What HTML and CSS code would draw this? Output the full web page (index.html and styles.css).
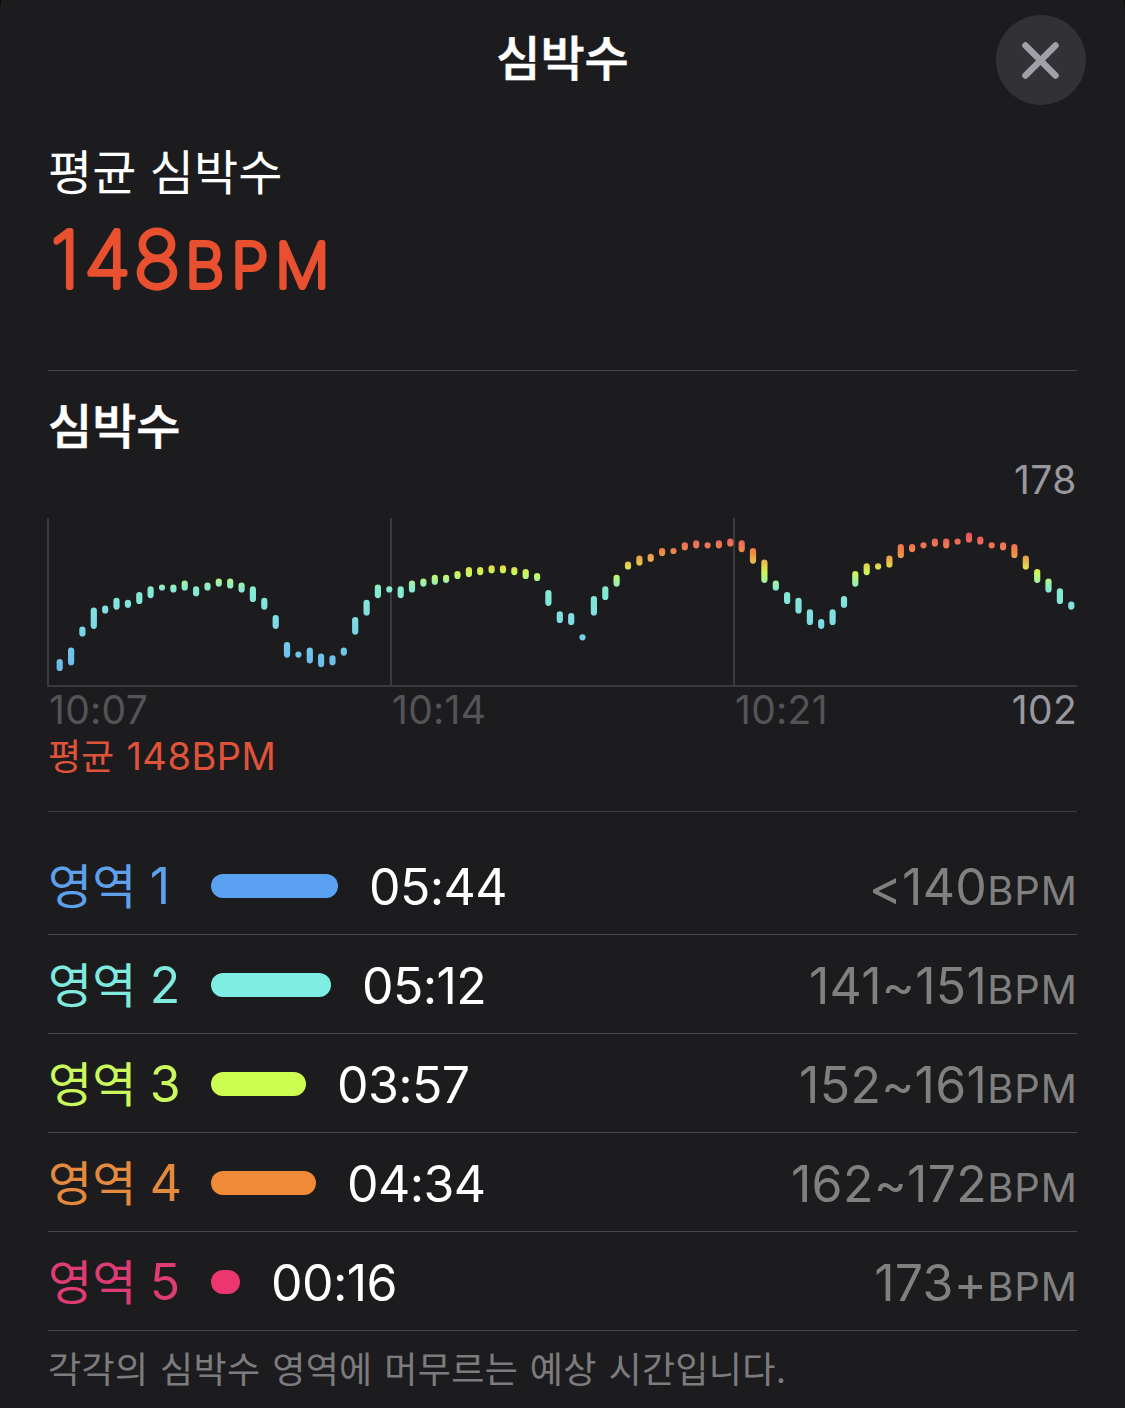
FILE: index.html
```html
<!DOCTYPE html>
<html lang="ko">
<head>
  <meta charset="UTF-8" />
  <meta name="viewport" content="width=device-width, initial-scale=1.0"/>
  <title>심박수</title>
  <link rel="stylesheet" href="styles.css">
</head>
<body>
  <div class="sheet">
    <header class="header">
      <h1 class="title">심박수</h1>
      <button class="close" aria-label="닫기">
        <svg width="90" height="90" viewBox="0 0 90 90">
          <path d="M29.5 30.5L59.5 60.5M59.5 30.5L29.5 60.5" />
        </svg>
      </button>
    </header>

    <section class="summary">
      <div class="summary-label">평균 심박수</div>
      <svg class="summary-value" width="300" height="100" viewBox="0 0 300 100">
        <text class="value" x="3 36.5 86" y="67">148</text>
        <text class="unit" x="137.5 183.5 227.5" y="67">BPM</text>
      </svg>
    </section>

    <section class="chart">
      <h2 class="chart-title">심박수</h2>
      <div class="chart-max">178</div>
      <svg class="plot" width="1030" height="169" viewBox="0 0 1030 169">
        <defs>
          <linearGradient id="zones" gradientUnits="userSpaceOnUse" x1="0" y1="14" x2="0" y2="154">
            <stop offset="0" stop-color="#ed4a62" />
            <stop offset="0.08" stop-color="#ec7056" />
            <stop offset="0.15" stop-color="#f08a42" />
            <stop offset="0.21" stop-color="#e8b84e" />
            <stop offset="0.255" stop-color="#dfe04e" />
            <stop offset="0.295" stop-color="#c8f95c" />
            <stop offset="0.35" stop-color="#a8f29a" />
            <stop offset="0.41" stop-color="#84ebd2" />
            <stop offset="0.62" stop-color="#7fdde4" />
            <stop offset="0.88" stop-color="#6cc4ec" />
            <stop offset="1" stop-color="#70b4e8" />
          </linearGradient>
        </defs>
        <path class="axis" d="M1 0V168H1030M344 0V168M687 0V168" />
        <path class="samples" stroke="url(#zones)" d="" />
      </svg>
      <div class="times">
        <span>10:07</span>
        <span>10:14</span>
        <span>10:21</span>
        <span class="chart-min">102</span>
      </div>
      <div class="average">평균 <span class="average-num">148BPM</span></div>
    </section>

    <section class="zones">
      <div class="zone zone1">
        <span class="name">영역 <b>1</b></span>
        <span class="bar" style="width: 127px"></span>
        <span class="time">05:44</span>
        <span class="range">&lt;140<small>BPM</small></span>
      </div>
      <div class="zone zone2">
        <span class="name">영역 <b>2</b></span>
        <span class="bar" style="width: 120px"></span>
        <span class="time">05:12</span>
        <span class="range">141~151<small>BPM</small></span>
      </div>
      <div class="zone zone3">
        <span class="name">영역 <b>3</b></span>
        <span class="bar" style="width: 95px"></span>
        <span class="time">03:57</span>
        <span class="range">152~161<small>BPM</small></span>
      </div>
      <div class="zone zone4">
        <span class="name">영역 <b>4</b></span>
        <span class="bar" style="width: 105px"></span>
        <span class="time">04:34</span>
        <span class="range">162~172<small>BPM</small></span>
      </div>
      <div class="zone zone5">
        <span class="name">영역 <b>5</b></span>
        <span class="bar" style="width: 29px"></span>
        <span class="time">00:16</span>
        <span class="range">173+<small>BPM</small></span>
      </div>
    </section>

    <p class="note">각각의 심박수 영역에 머무르는 예상 시간입니다.</p>
  </div>

  <script>
    // [high, low] BPM of each interval
    const samples = [
      [112, 109], [118, 112], [129, 127], [139, 131], [140, 139], [144, 141],
      [143, 142], [147, 144], [150, 147], [151, 151], [151, 150], [153, 151],
      [150, 148], [152, 151], [154, 153], [154, 152], [152, 150], [150, 145],
      [144, 141], [135, 131], [121, 116], [116, 116], [118, 113], [115, 111],
      [114, 112], [118, 117], [134, 128], [143, 138], [151, 147], [150, 150],
      [150, 147], [153, 150], [154, 153], [156, 154], [156, 155], [158, 157],
      [160, 158], [160, 159], [161, 160], [161, 160], [160, 159], [159, 157],
      [157, 156], [148, 143], [137, 134], [136, 133], [125, 125], [145, 138],
      [150, 146], [156, 153], [163, 162], [166, 164], [167, 166], [170, 169],
      [170, 170], [173, 172], [174, 173], [173, 173], [174, 173], [175, 174],
      [174, 171], [170, 165], [164, 155], [153, 151], [147, 144], [144, 139],
      [138, 133], [133, 131], [138, 133], [145, 142], [158, 153], [162, 159],
      [162, 162], [166, 163], [172, 168], [172, 171], [173, 173], [175, 174],
      [175, 173], [175, 175], [178, 176], [176, 175], [173, 173], [173, 172],
      [172, 168], [166, 162], [159, 155], [154, 150], [149, 144], [142, 141]
    ];

    const toY = bpm => (17.7 + (178 - bpm) * 1.917).toFixed(1);

    const d = samples.map(([high, low], i) => {
      const x = (12.7 + i * 11.366).toFixed(1);
      // the extra .01 keeps single-value samples visible as dots
      return `M${x} ${toY(high)}V${Number(toY(low)) + 0.01}`;
    }).join('');

    document.querySelector('.samples').setAttribute('d', d);
  </script>
</body>
</html>
```
FILE: styles.css
```css
* {
  margin: 0;
  padding: 0;
  box-sizing: border-box;
}

body {
  background: #000;
  color: #fff;
  font-family: Inter, "Noto Sans CJK KR", sans-serif;
}

.sheet {
  height: 1408px;
  padding: 0 48px;
  background: #1c1c1e;
  border-radius: 1px 1px 0 0 / 16px;
  overflow: hidden;
}

.header {
  display: grid;
  grid-template-columns: 90px 1fr 90px;
  height: 105px;
  padding-top: 15px;
  margin-right: -9px;
  margin-left: -9px;
}

.title,
.chart-title {
  font-size: 48px;
  font-weight: 500;
  -webkit-text-stroke: 0.6px #fff;
}

.title {
  grid-column: 2;
  line-height: 87px;
  text-align: center;
}

.close {
  width: 90px;
  height: 90px;
  border: none;
  border-radius: 50%;
  background: #313136;
  cursor: pointer;
}

.close svg {
  display: block;
}

.close path {
  stroke: #a0a0a8;
  stroke-width: 6.5;
  stroke-linecap: round;
}

.summary {
  height: 266px;
  padding-top: 38px;
  border-bottom: 1px solid #444446;
}

.summary-label {
  font-size: 48px;
  line-height: 60px;
}

.summary-value {
  display: block;
  margin-top: 17px;
  overflow: visible;
}

.summary-value text {
  fill: #e8502f;
  stroke: #e8502f;
  stroke-linejoin: round;
  font-weight: 100;
}

.value {
  font-size: 77px;
  stroke-width: 5.8;
}

.unit {
  font-size: 60px;
  stroke-width: 6;
}

.chart {
  height: 441px;
  padding-top: 26px;
  border-bottom: 1px solid #3e3e40;
}

.chart-title {
  line-height: 60px;
}

.chart-max {
  height: 47px;
  margin-bottom: 14px;
  color: #98989e;
  font-size: 39px;
  letter-spacing: 0.5px;
  line-height: 46px;
  text-align: right;
}

.plot {
  display: block;
  margin-left: -1px;
}

.plot path {
  fill: none;
}

.axis {
  stroke: #3a3a3c;
  stroke-width: 2;
}

.samples {
  stroke-width: 6.2;
  stroke-linecap: round;
}

.times {
  display: grid;
  grid-template-columns: 343px 343px 1fr auto;
  height: 46px;
  padding-left: 1px;
  color: #545456;
  font-size: 39px;
  letter-spacing: 0.3px;
  line-height: 46px;
}

.chart-min {
  color: #98989e;
}

.average {
  color: #e0533a;
  font-size: 36px;
  line-height: 46px;
  word-spacing: 2px;
}

.average-num {
  font-size: 38px;
  letter-spacing: 0.5px;
}

.zones {
  padding-top: 24px;
}

.zone {
  display: flex;
  align-items: center;
  height: 99px;
  padding-top: 2px;
  border-bottom: 1px solid #48484a;
  line-height: 96px;
  white-space: nowrap;
}

.name {
  width: 163px;
  font-size: 48px;
}

.name b {
  font-size: 50px;
  font-weight: 400;
}

.bar {
  height: 24px;
  margin-right: 31px;
  border-radius: 12px;
}

.time {
  padding-top: 2px;
  font-size: 50px;
  letter-spacing: -0.6px;
}

.range {
  margin-left: auto;
  padding-top: 5px;
  color: #808080;
  font-size: 50px;
  letter-spacing: 0.3px;
}

.range small {
  margin-right: -1px;
  font-size: 40px;
  letter-spacing: 1px;
}

.zone1 .name { color: #5fa0ea; }
.zone1 .bar { background: #5ba1f2; }

.zone2 .name { color: #80eadf; }
.zone2 .bar { background: #7eeee3; }

.zone3 .name { color: #cbf95c; }
.zone3 .bar { background: #cbfe50; }

.zone4 .name { color: #e38a3f; }
.zone4 .bar { background: #f08a36; }

.zone5 .name { color: #de3c72; }
.zone5 .bar { background: #ec366f; }

.note {
  color: #7c7c7e;
  font-size: 36px;
  letter-spacing: 0.35px;
  line-height: 78px;
  word-spacing: 1.2px;
}
```
